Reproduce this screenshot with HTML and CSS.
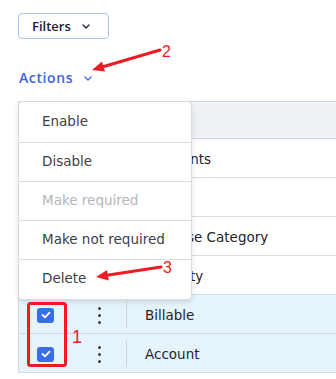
FILE: index.html
```html
<!DOCTYPE html>
<html lang="en">
<head>
    <meta charset="UTF-8">
    <title>Fields — Actions</title>
    <link rel="stylesheet" href="styles.css">
</head>
<body>

<div class="toolbar">
    <button class="filters-btn">
        Filters
        <svg class="chevron" width="8" height="5" viewBox="0 0 8 5"><path d="M1 1l3 3 3-3" fill="none" stroke="currentColor" stroke-width="1.3" stroke-linecap="round" stroke-linejoin="round"/></svg>
    </button>
</div>

<div class="actions-link">
    Actions
    <svg class="chevron" width="8" height="5" viewBox="0 0 8 5"><path d="M1 1l3 3 3-3" fill="none" stroke="currentColor" stroke-width="1.3" stroke-linecap="round" stroke-linejoin="round"/></svg>
</div>

<div class="table-wrap">
    <table class="fields-table">
        <thead>
            <tr>
                <th class="col-check"></th>
                <th class="col-menu"></th>
                <th class="col-name"></th>
            </tr>
        </thead>
        <tbody id="fields-body">
        </tbody>
    </table>

    <ul class="actions-menu">
        <li>Enable</li>
        <li>Disable</li>
        <li class="disabled">Make required</li>
        <li>Make not required</li>
        <li>Delete</li>
    </ul>
</div>

<svg class="notes" width="336" height="379" viewBox="0 0 336 379">
    <g stroke="#ec1c24" stroke-width="3" stroke-linecap="round" fill="none">
        <line x1="160" y1="50" x2="103" y2="66.7"/>
        <line x1="161" y1="267" x2="107" y2="275.3"/>
        <rect x="28.5" y="303.5" width="37" height="62" rx="2"/>
    </g>
    <g fill="#ec1c24">
        <polygon points="92,70 105,71.6 102,61.6"/>
        <polygon points="96,277 108.8,280.4 107,270"/>
        <text x="162" y="57" class="note-num">2</text>
        <text x="163" y="273" class="note-num">3</text>
        <text x="72" y="343" class="note-num big">1</text>
    </g>
</svg>

<script>
    const fields = [
        { name: 'Payments', checked: false },
        { name: 'Date', checked: false },
        { name: 'Expense Category', checked: false },
        { name: 'Quantity', checked: false },
        { name: 'Billable', checked: true },
        { name: 'Account', checked: true }
    ];

    const tbody = document.getElementById('fields-body');

    fields.forEach((field) => {
        const tr = document.createElement('tr');
        if (field.checked) tr.className = 'selected';

        tr.innerHTML = `
            <td class="col-check">${field.checked ? '<span class="checkbox"><svg width="10" height="8" viewBox="0 0 10 8"><path d="M1.5 4l2.5 2.3L8.5 1.7" fill="none" stroke="#fff" stroke-width="1.8" stroke-linecap="round" stroke-linejoin="round"/></svg></span>' : ''}</td>
            <td class="col-menu">${field.checked ? '<span class="kebab"><i></i><i></i><i></i></span>' : ''}</td>
            <td class="col-name">${field.name}</td>
        `;

        tbody.appendChild(tr);
    });
</script>

</body>
</html>
```

FILE: styles.css
```css
body {
    margin: 0;
    padding: 13px 0 0 18px;
    width: 318px;
    height: 366px;
    overflow: hidden;
    font-family: "Open Sans", "Liberation Sans", sans-serif;
    background-color: #fff;
    color: #2b2f36;
}

.filters-btn {
    display: inline-flex;
    align-items: center;
    gap: 11px;
    height: 26px;
    width: 91px;
    padding: 0 0 0 13px;
    border: 1px solid #abc2ee;
    border-radius: 4px;
    background-color: #fff;
    font-family: inherit;
    font-size: 13px;
    font-weight: 600;
    color: #1d2137;
}

.actions-link {
    display: flex;
    align-items: center;
    gap: 11px;
    margin-top: 28px;
    padding-left: 1px;
    height: 20px;
    font-size: 14px;
    font-weight: 600;
    letter-spacing: 0.6px;
    color: #3f63e0;
}

.actions-link .chevron {
    margin-top: 3px;
}

.table-wrap {
    position: relative;
    margin-top: 14px;
}

.fields-table {
    width: 100%;
    border-collapse: collapse;
    font-family: "DejaVu Sans", sans-serif;
    font-size: 13.5px;
}

.fields-table th,
.fields-table td {
    padding: 2px 0 0;
    border-top: 1px solid #d4dae1;
    border-bottom: 1px solid #d4dae1;
    text-align: left;
    font-weight: normal;
}

.fields-table th:first-child,
.fields-table td:first-child {
    border-left: 1px solid #d4dae1;
}

.fields-table thead tr {
    height: 37px;
    background-color: #eef2f6;
}

.fields-table tbody tr {
    height: 39px;
}

.fields-table tr.selected {
    background-color: #e5f3fb;
}

.fields-table .col-check {
    width: 53px;
    padding-left: 18px;
}

.fields-table .col-menu {
    width: 36px;
}

.fields-table .col-name {
    position: relative;
    padding-left: 19px;
    color: #1f2329;
}

tr.selected .col-name::before {
    content: "";
    position: absolute;
    left: 0;
    top: 6px;
    bottom: 5px;
    border-left: 1px solid #ccd3da;
}

.checkbox {
    display: flex;
    align-items: center;
    justify-content: center;
    width: 17px;
    height: 15px;
    border-radius: 3px;
    background-color: #3a6ee8;
}

.kebab {
    display: flex;
    flex-direction: column;
    gap: 4px;
    width: 3px;
    margin-left: 8px;
}

.kebab i {
    display: block;
    width: 3px;
    height: 3px;
    border-radius: 50%;
    background-color: #3a3d42;
}

.actions-menu {
    position: absolute;
    top: 0;
    left: 0;
    width: 172px;
    margin: 0;
    padding: 0;
    list-style: none;
    background-color: #fff;
    border: 1px solid #d8dce1;
    border-radius: 4px;
    box-shadow: 0 2px 5px rgba(0, 0, 0, 0.12);
    font-family: "DejaVu Sans", sans-serif;
    font-size: 13.5px;
    color: #3c4148;
}

.actions-menu li {
    height: 38.3px;
    line-height: 36px;
    padding-left: 23px;
    border-bottom: 1px solid #dadde2;
}

.actions-menu li:first-child {
    height: 39.5px;
    line-height: 38px;
}

.actions-menu li:last-child {
    border-bottom: none;
}

.actions-menu li.disabled {
    color: #b3b7bd;
}

.notes {
    position: absolute;
    top: 0;
    left: 0;
    pointer-events: none;
}

.note-num {
    font-family: "Liberation Sans", sans-serif;
    font-size: 16px;
}

.note-num.big {
    font-size: 18px;
}
```
